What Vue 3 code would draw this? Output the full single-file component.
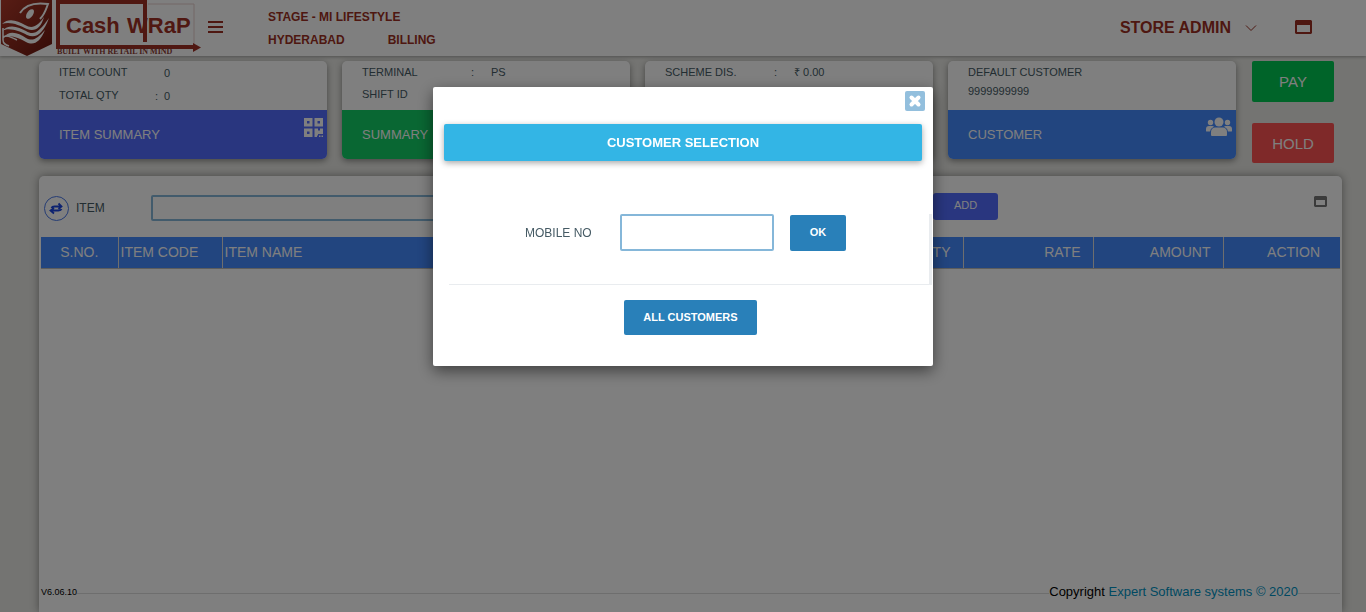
<script setup>
import { ref } from 'vue'

const item = ref('')
const mobile = ref('')

const cards = [
  {
    title: 'ITEM SUMMARY', tone: 'indigo', icon: 'qr', kind: 'count',
    rows: [['ITEM COUNT', '', '0'], ['TOTAL QTY', ':', '0']],
  },
  {
    title: 'SUMMARY', tone: 'green', icon: '', kind: 'wide',
    rows: [['TERMINAL', ':', 'PS'], ['SHIFT ID', '', '']],
  },
  {
    title: '', tone: 'blue', icon: '', kind: 'wide',
    rows: [['SCHEME DIS.', ':', '₹ 0.00']],
  },
  {
    title: 'CUSTOMER', tone: 'blue', icon: 'users', kind: 'person',
    rows: [['DEFAULT CUSTOMER', '', ''], ['9999999999', '', '']],
  },
]

const columns = [
  { label: 'S.NO.', cls: 'c-no' },
  { label: 'ITEM CODE', cls: 'c-code' },
  { label: 'ITEM NAME', cls: 'c-name' },
  { label: 'QTY', cls: 'c-num' },
  { label: 'RATE', cls: 'c-num' },
  { label: 'AMOUNT', cls: 'c-num' },
  { label: 'ACTION', cls: 'c-act' },
]
</script>

<template>
  <div class="page">
    <header class="topbar">
      <svg class="logo" width="204" height="56" viewBox="0 0 204 56" role="img" aria-label="Cash Wrap">
        <defs>
          <linearGradient id="shield" x1="0" y1="0" x2="1" y2="1">
            <stop offset="0" stop-color="#b03a2a" />
            <stop offset="1" stop-color="#6a170f" />
          </linearGradient>
        </defs>
        <path d="M1 0H52V44L27 56L1 44Z" fill="url(#shield)" />
        <path d="M20 13C25 5 34 2 48 4C46 9 45 14 40 19" fill="none" stroke="#fff" stroke-width="2" />
        <ellipse cx="30" cy="14" rx="3" ry="5.500" transform="rotate(35 30 14)" fill="#fff" />
        <path d="M2 24C9 17 18 21 25 25C32 29 37 27 44 17C41 28 35 32 27 29C19 25 10 21 2 24Z" fill="#fff" />
        <path d="M2 31C9 23 19 27 26 31C34 36 39 32 49 18C43 34 36 39 27 35C19 31 9 27 2 31Z" fill="#fff" />
        <path d="M3 38C9 29 19 33 26 38C33 42 38 38 45 30C40 42 34 46 26 42C18 37 9 34 3 38Z" fill="#fff" />
        <path d="M3 38C5 34 11 37 17 40M3 28V40C3 44 6 45 9 46" fill="none" stroke="#fff" stroke-width="1.500" />
        <path d="M148 4H194V44" fill="none" stroke="#e6cfcc" stroke-width="1" />
        <path d="M145 42V2H58V47H194" fill="none" stroke="#a03025" stroke-width="4" />
        <path d="M193 43L201 47.500L193 52Z" fill="#a03025" />
        <text x="66" y="33" class="logo-word">Cash</text>
        <text x="127" y="33" class="logo-word">WRaP</text>
        <text x="57" y="54" class="logo-tag">BUILT WITH RETAIL IN MIND</text>
      </svg>
      <button class="plain burger" aria-label="Menu">
        <svg width="16" height="14" viewBox="0 0 16 14"><path d="M0 2H15M0 7H15M0 12H15" stroke="#9c2f22" stroke-width="2" /></svg>
      </button>
      <div class="place">
        <span>STAGE - MI LIFESTYLE</span>
        <div class="place-row"><span>HYDERABAD</span><span>BILLING</span></div>
      </div>
      <button class="plain admin">
        STORE ADMIN
        <svg width="12" height="8" viewBox="0 0 12 8"><path d="M1 1.500L6 6.500L11 1.500" fill="none" stroke="#9c2f22" stroke-width="1" /></svg>
      </button>
      <button class="plain window" aria-label="Full screen">
        <svg width="17" height="14" viewBox="0 0 17 14"><path fill-rule="evenodd" d="M1 0H16L17 1V13L16 14H1L0 13V1ZM2 5V12H15V5Z" fill="#9c2f22" /></svg>
      </button>
    </header>

    <main class="content">
      <section class="cards">
        <article v-for="(card, i) in cards" :key="i" class="card" :class="card.kind">
          <dl class="facts">
            <div v-for="row in card.rows" :key="row[0]" class="fact">
              <dt>{{ row[0] }}</dt>
              <dd>{{ row[1] }}</dd>
              <dd>{{ row[2] }}</dd>
            </div>
          </dl>
          <button class="card-title" :class="card.tone">
            <span>{{ card.title }}</span>
            <svg v-if="card.icon === 'qr'" class="qr" width="19" height="19" viewBox="0 0 19 19" fill="#fff">
              <path fill-rule="evenodd" d="M0 0H8.500V8.500H0ZM3 3V5.500H5.500V3ZM10.500 0H19V8.500H10.500ZM13.500 3V5.500H16V3ZM0 10.500H8.500V19H0ZM3 13.500V16H5.500V13.500ZM10.500 10.500H14V12.500H16V10.500H19V16H14V17.500H13V19H10.500ZM15 17.500H16.500V19H15ZM17.500 17.500H19V19H17.500Z" />
            </svg>
            <svg v-if="card.icon === 'users'" class="users" width="26" height="19" viewBox="0 0 26 19" fill="#fff">
              <circle cx="13" cy="5" r="4.500" />
              <circle cx="4.500" cy="5.500" r="2.700" />
              <circle cx="21.500" cy="5.500" r="2.700" />
              <path d="M5 18V15C5 12 7 10.500 9 10.500H17C19 10.500 21 12 21 15V18Q21 19 20 19H6Q5 19 5 18Z" />
              <path d="M0 14V12Q0 9 3 9H6.500L8 9.500Q5 11 4 14.500H1Q0 14.500 0 14ZM26 14V12Q26 9 23 9H19.500L18 9.500Q21 11 22 14.500H25Q26 14.500 26 14Z" />
            </svg>
          </button>
        </article>
        <div class="actions">
          <button class="pay">PAY</button>
          <button class="hold">HOLD</button>
        </div>
      </section>

      <section class="panel">
        <form class="entry" @submit.prevent>
          <button type="button" class="plain swap" aria-label="Swap">
            <svg width="25" height="25" viewBox="0 0 25 25" fill="none" stroke="#1a45e0">
              <circle cx="12.500" cy="12.500" r="12" stroke="#4a78e8" />
              <path d="M7.500 12C8 10.500 9 10.500 10.500 10.500H17M14.500 7.500L17.500 10.500L14.500 13M17.500 13C17 14.500 16 14.500 14.500 14.500H7M10 12L6.500 14.500L10 17.500" stroke-width="1.800" />
            </svg>
          </button>
          <label for="item">ITEM</label>
          <input id="item" v-model="item" type="text" />
          <button class="add">ADD</button>
          <button type="button" class="plain expand" aria-label="Expand">
            <svg width="13" height="11" viewBox="0 0 13 11"><path fill-rule="evenodd" d="M1 0H12L13 1V10L12 11H1L0 10V1ZM2 4V9H11V4Z" fill="#777" /></svg>
          </button>
        </form>
        <table>
          <thead>
            <tr><th v-for="c in columns" :key="c.label" :class="c.cls" scope="col">{{ c.label }}</th></tr>
          </thead>
        </table>
        <footer class="foot">
          <small>V6.06.10</small>
          <i class="rule"></i>
          <p>Copyright <a href="#">Expert Software systems © 2020</a></p>
          <i class="rule end"></i>
        </footer>
      </section>
    </main>

    <div class="overlay">
      <div class="modal" role="dialog" aria-modal="true" aria-labelledby="dlg-title">
        <button class="close" aria-label="Close">
          <svg width="14" height="14" viewBox="0 0 14 14"><path d="M3.500 3.500L10.500 10.500M10.500 3.500L3.500 10.500" stroke="#fff" stroke-width="4" stroke-linecap="round" /></svg>
        </button>
        <h2 id="dlg-title">CUSTOMER SELECTION</h2>
        <form class="lookup" @submit.prevent>
          <label for="mobile">MOBILE NO</label>
          <input id="mobile" v-model="mobile" type="text" />
          <button class="primary ok">OK</button>
        </form>
        <button class="primary all">ALL CUSTOMERS</button>
      </div>
    </div>
  </div>
</template>

<style>
html, body { margin: 0; overflow: hidden; }
</style>

<style scoped>
* { box-sizing: border-box; }
.page {
  height: 100vh;
  display: flex;
  flex-direction: column;
  overflow: hidden;
  background: #e8e8e4;
  color: #455a64;
  font-family: "Liberation Sans", Arial, sans-serif;
  font-size: 11px;
}
button, input { font-family: inherit; margin: 0; }
button { border: 0; padding: 0; color: #fff; cursor: pointer; }
svg { display: block; }
.plain { background: none; }

.topbar {
  display: flex;
  align-items: center;
  flex: 0 0 56px;
  background: #fff;
  box-shadow: 0 1px 3px rgba(0, 0, 0, 0.3);
  color: #9c2f22;
  font-weight: bold;
}
.logo-word { font: bold 22px "Liberation Sans Narrow", "Liberation Sans", sans-serif; fill: #a03025; }
.logo-tag { font: bold 8px "Liberation Serif", serif; fill: #8c3a32; }
.burger { margin: 0 0 3px 4px; }
.place { margin-left: 44px; font-size: 12px; line-height: 23px; padding-top: 1px; }
.place-row { display: flex; gap: 43px; }
.admin {
  margin: 0 38px 0 auto;
  display: flex;
  align-items: center;
  gap: 14px;
  color: inherit;
  font-size: 16px;
  font-weight: bold;
}
.window { margin: 0 54px 2px 0; }

.content {
  flex: 1;
  display: flex;
  flex-direction: column;
  gap: 13px;
  padding: 5px 24px 0 39px;
}
.cards {
  display: grid;
  grid-template-columns: repeat(4, 1fr) 83px;
  gap: 15px;
  margin-right: 8px;
}
.card {
  align-self: start;
  border-radius: 5px;
  overflow: hidden;
  background: #fff;
  box-shadow: 0 2px 6px rgba(0, 0, 0, 0.4);
}
.facts { margin: 0; height: 49px; padding: 0 20px; }
.fact { display: grid; grid-template-columns: 109px 20px 1fr; line-height: 22px; }
.fact dd { margin: 0; }
.count .fact { grid-template-columns: 96px 9px 1fr; line-height: 22px; }
.count dd { padding-top: 1px; }
.person .fact { grid-template-columns: 1fr; line-height: 19px; }
.person .facts { padding-top: 2px; }
.person dd { display: none; }
.card-title {
  display: flex;
  justify-content: space-between;
  width: 100%;
  height: 49px;
  padding: 0 4px 0 20px;
  font-size: 13px;
  line-height: 49px;
}
.qr { margin-top: 8px; }
.users { margin-top: 7px; }
.indigo { background: #536dfe; }
.green { background: #13ce66; }
.blue { background: #448aff; }
.actions { display: flex; flex-direction: column; gap: 21px; margin-left: 1px; }
.actions button { border-radius: 2px; font-size: 15px; }
.actions .pay { height: 41px; background: #00c853; }
.actions .hold { height: 40px; background: #ff5252; }

.panel {
  flex: 1;
  display: flex;
  flex-direction: column;
  padding: 0 2px;
  border-radius: 5px 5px 0 0;
  background: #fff;
  box-shadow: 0 0 8px rgba(0, 0, 0, 0.4);
}
.entry { display: flex; align-items: center; height: 61px; padding: 3px 13px 0 3px; }
.entry label { width: 75px; margin-left: 7px; font-size: 12px; }
.entry input {
  flex: 1;
  height: 26px;
  min-width: 0;
  margin-right: 8px;
  border: 2px solid #85b7d9;
  border-radius: 2px;
  background: #fff;
}
.add {
  width: 65px;
  height: 27px;
  margin-bottom: 3px;
  padding-bottom: 3px;
  border-radius: 3px;
  background: #536dfe;
  font-size: 11px;
}
.expand { margin: 0 0 14px 316px; }
table { width: 100%; border-collapse: collapse; table-layout: fixed; }
th {
  height: 31px;
  padding: 0 2px;
  border-right: 1px solid #ddd;
  border-bottom: 1px solid #bbb;
  background: #448aff;
  color: #fff;
  font-size: 14px;
  font-weight: normal;
  text-align: left;
}
th:last-child { border-right: 0; }
.c-no { width: 77px; text-align: center; }
.c-code { width: 104px; }
.c-num { width: 130px; padding-right: 12px; text-align: right; }
.c-act { width: 117px; padding-right: 20px; text-align: right; }
.foot {
  display: flex;
  align-items: center;
  margin-top: auto;
  padding-bottom: 10px;
  color: #000;
  font-size: 13px;
  line-height: 20px;
}
.foot small { font-size: 9px; }
.foot p { margin: 0; }
.foot a { color: #0093c4; text-decoration: none; }
.rule { flex: 1; height: 1px; margin-top: 3px; background: #ddd; }
.rule.end { flex: 0 0 42px; }

.overlay {
  position: fixed;
  inset: 0;
  display: flex;
  justify-content: center;
  align-items: flex-start;
  padding-top: 87px;
  background: rgba(0, 0, 0, 0.5);
}
.modal {
  display: flex;
  flex-direction: column;
  width: 500px;
  padding: 4px 0 31px;
  border-radius: 2px;
  background: #fff;
  box-shadow: 0 5px 15px rgba(0, 0, 0, 0.5);
}
.close {
  display: grid;
  place-items: center;
  align-self: flex-end;
  width: 20px;
  height: 20px;
  margin-right: 8px;
  border-radius: 2px;
  background: #93bfdd;
}
h2 {
  margin: 13px 11px 0;
  border-radius: 2px;
  background: #33b5e5;
  box-shadow: 0 2px 6px rgba(0, 0, 0, 0.35);
  color: #fff;
  font-size: 13px;
  line-height: 37px;
  text-align: center;
}
.lookup {
  display: flex;
  align-items: flex-start;
  height: 71px;
  margin: 53px 1px 15px 16px;
  padding-left: 76px;
  border-right: 3px solid #e9ecef;
  border-bottom: 1px solid #e9ecef;
}
.lookup label { width: 95px; font-size: 12px; line-height: 38px; }
.lookup input {
  width: 154px;
  height: 37px;
  border: 2px solid #85b7d9;
  border-radius: 2px;
  background: #fff;
}
.primary { padding-bottom: 2px; border-radius: 2px; background: #2980b9; font-size: 11px; font-weight: bold; }
.ok { width: 56px; height: 36px; margin: 1px 0 0 16px; }
.all { align-self: center; width: 133px; height: 35px; margin-left: 15px; }
</style>
